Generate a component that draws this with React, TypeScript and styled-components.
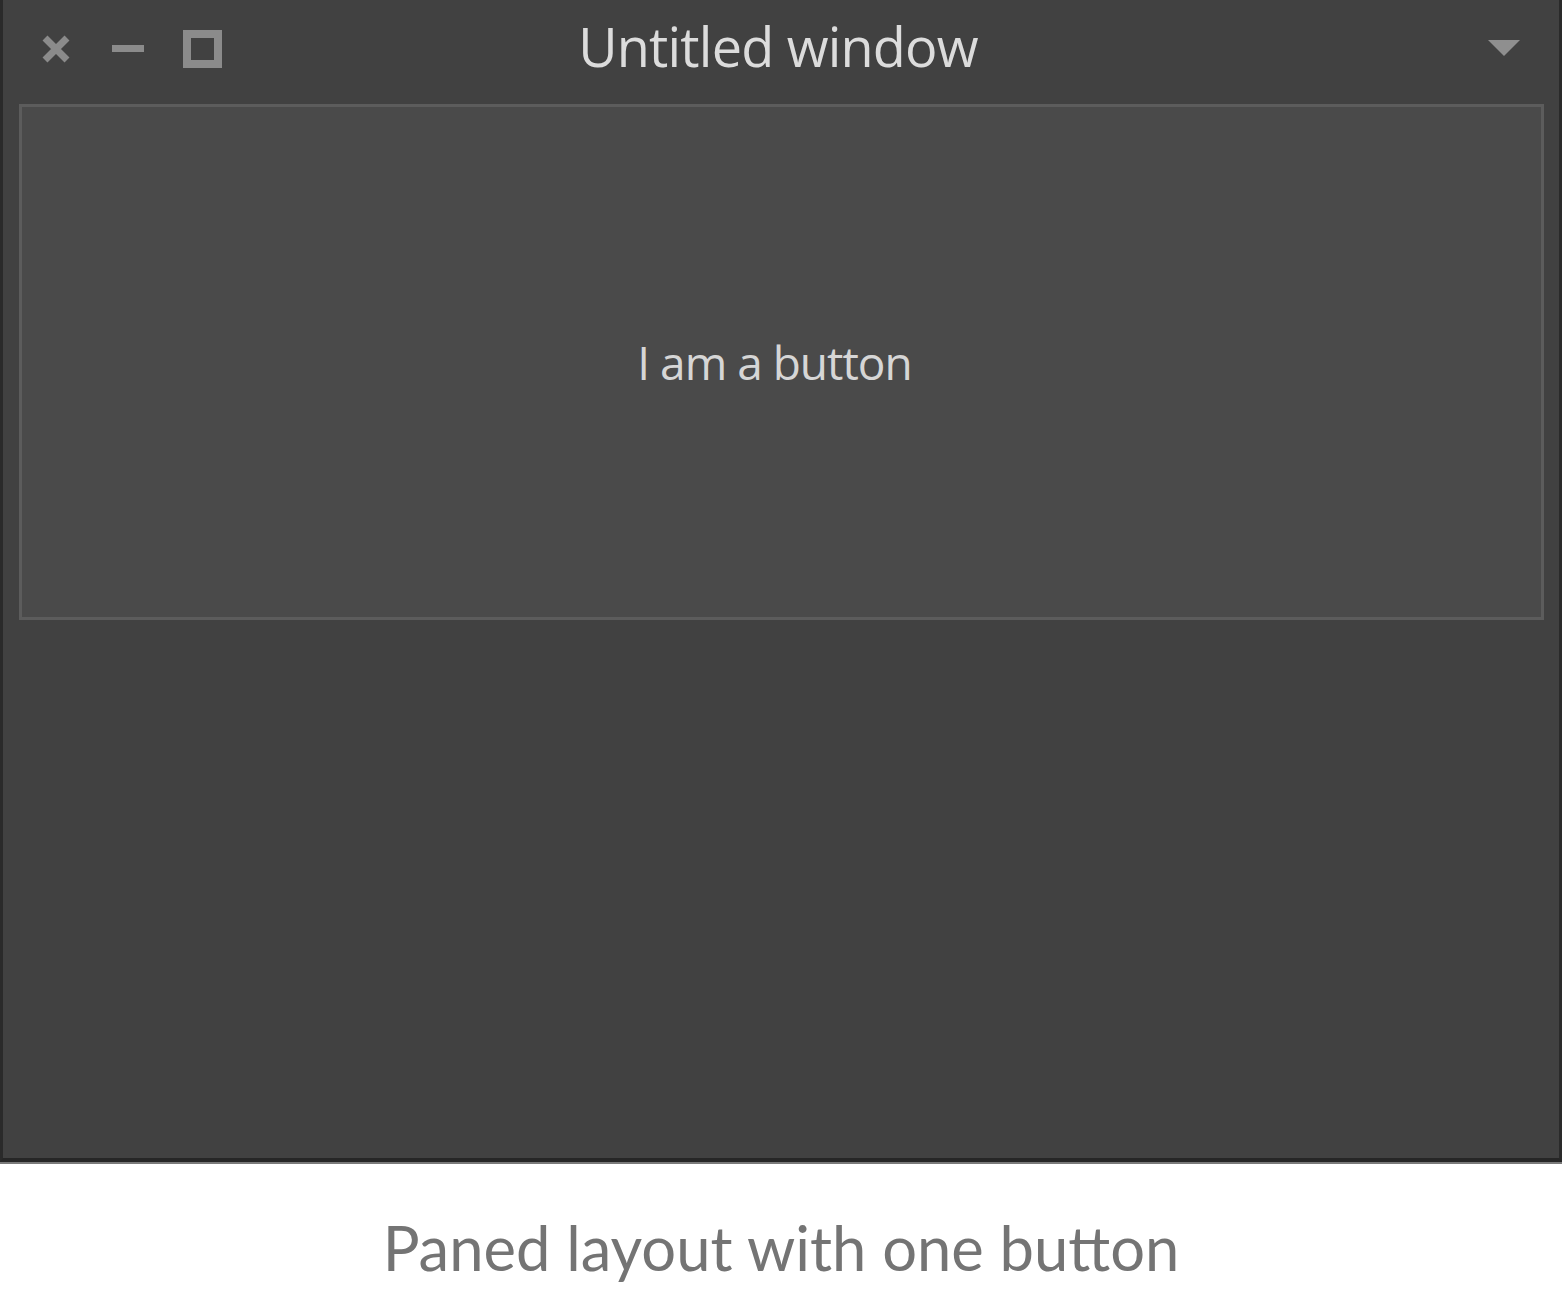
import styled, { createGlobalStyle } from 'styled-components';

const Global = createGlobalStyle`
  html, body {
    margin: 0;
    padding: 0;
    background: #ffffff;
  }
`;

export default function App() {
  return (
    <>
      <Global />
      <Page>
        <Window>
          <TitleBar>
            <Controls>
              <CloseIcon />
              <MinimizeIcon />
              <MaximizeIcon />
            </Controls>
            <Title>Untitled window</Title>
            <MenuIcon />
          </TitleBar>
          <Paned>
            <PaneButton>I am a button</PaneButton>
            <EmptyPane />
          </Paned>
        </Window>
        <Caption>Paned layout with one button</Caption>
      </Page>
    </>
  );
}

function CloseIcon() {
  return (
    <Icon width="28" height="28" viewBox="0 0 28 28" $left={39}>
      <path d="M3 3 L25 25 M25 3 L3 25" stroke="#8b8b8b" strokeWidth="7" />
    </Icon>
  );
}

function MinimizeIcon() {
  return (
    <Icon width="32" height="8" viewBox="0 0 32 8" $left={42}>
      <rect x="0" y="0" width="32" height="7" fill="#8b8b8b" />
    </Icon>
  );
}

function MaximizeIcon() {
  return (
    <Icon width="39" height="38" viewBox="0 0 39 38" $left={39}>
      <rect x="4" y="4" width="31" height="30" fill="none" stroke="#8b8b8b" strokeWidth="8" />
    </Icon>
  );
}

function MenuIcon() {
  return (
    <Menu width="32" height="16" viewBox="0 0 32 16">
      <path d="M0 0 H32 L16 16 Z" fill="#8f8f8f" />
    </Menu>
  );
}

const Page = styled.div`
  width: 1562px;
  display: flex;
  flex-direction: column;
  align-items: stretch;
`;

const Window = styled.div`
  height: 1162px;
  box-sizing: border-box;
  background: #414141;
  border-left: 3px solid #2a2a2a;
  border-right: 3px solid #2a2a2a;
  border-bottom: 4px solid #262626;
  box-shadow: 0 2px 0 #7a7a7a;
  display: flex;
  flex-direction: column;
`;

const TitleBar = styled.div`
  height: 104px;
  display: flex;
  align-items: center;
  position: relative;
  padding: 0 39px 0 0;
  box-sizing: border-box;
`;

const Controls = styled.div`
  display: flex;
  align-items: center;
  height: 100%;
  padding-bottom: 6px;
  box-sizing: border-box;
`;

const Icon = styled.svg<{ $left: number }>`
  display: block;
  margin-left: ${(p) => p.$left}px;
  flex: none;
`;

const Title = styled.div`
  position: absolute;
  left: 0;
  right: 0;
  top: 11px;
  padding-right: 6px;
  text-align: center;
  font-family: 'Open Sans', sans-serif;
  font-size: 54px;
  letter-spacing: -0.8px;
  line-height: 1.3;
  color: #dcdcdc;
  pointer-events: none;
`;

const Menu = styled.svg`
  display: block;
  margin-left: auto;
  margin-top: -8px;
  flex: none;
`;

const Paned = styled.div`
  flex: 1;
  display: flex;
  flex-direction: column;
  padding: 0 15px 0 16px;
`;

const PaneButton = styled.div`
  height: 516px;
  box-sizing: border-box;
  background: #4a4a4a;
  border: 3px solid #5c5c5c;
  display: flex;
  align-items: center;
  justify-content: center;
  padding-right: 14px;
  font-family: 'Open Sans', sans-serif;
  font-size: 46px;
  letter-spacing: -1px;
  color: #d6d6d6;
`;

const EmptyPane = styled.div`
  flex: 1;
`;

const Caption = styled.div`
  height: 150px;
  display: flex;
  align-items: center;
  justify-content: center;
  padding-top: 20px;
  box-sizing: border-box;
  font-family: Lato, sans-serif;
  font-size: 61.5px;
  color: #747474;
`;
